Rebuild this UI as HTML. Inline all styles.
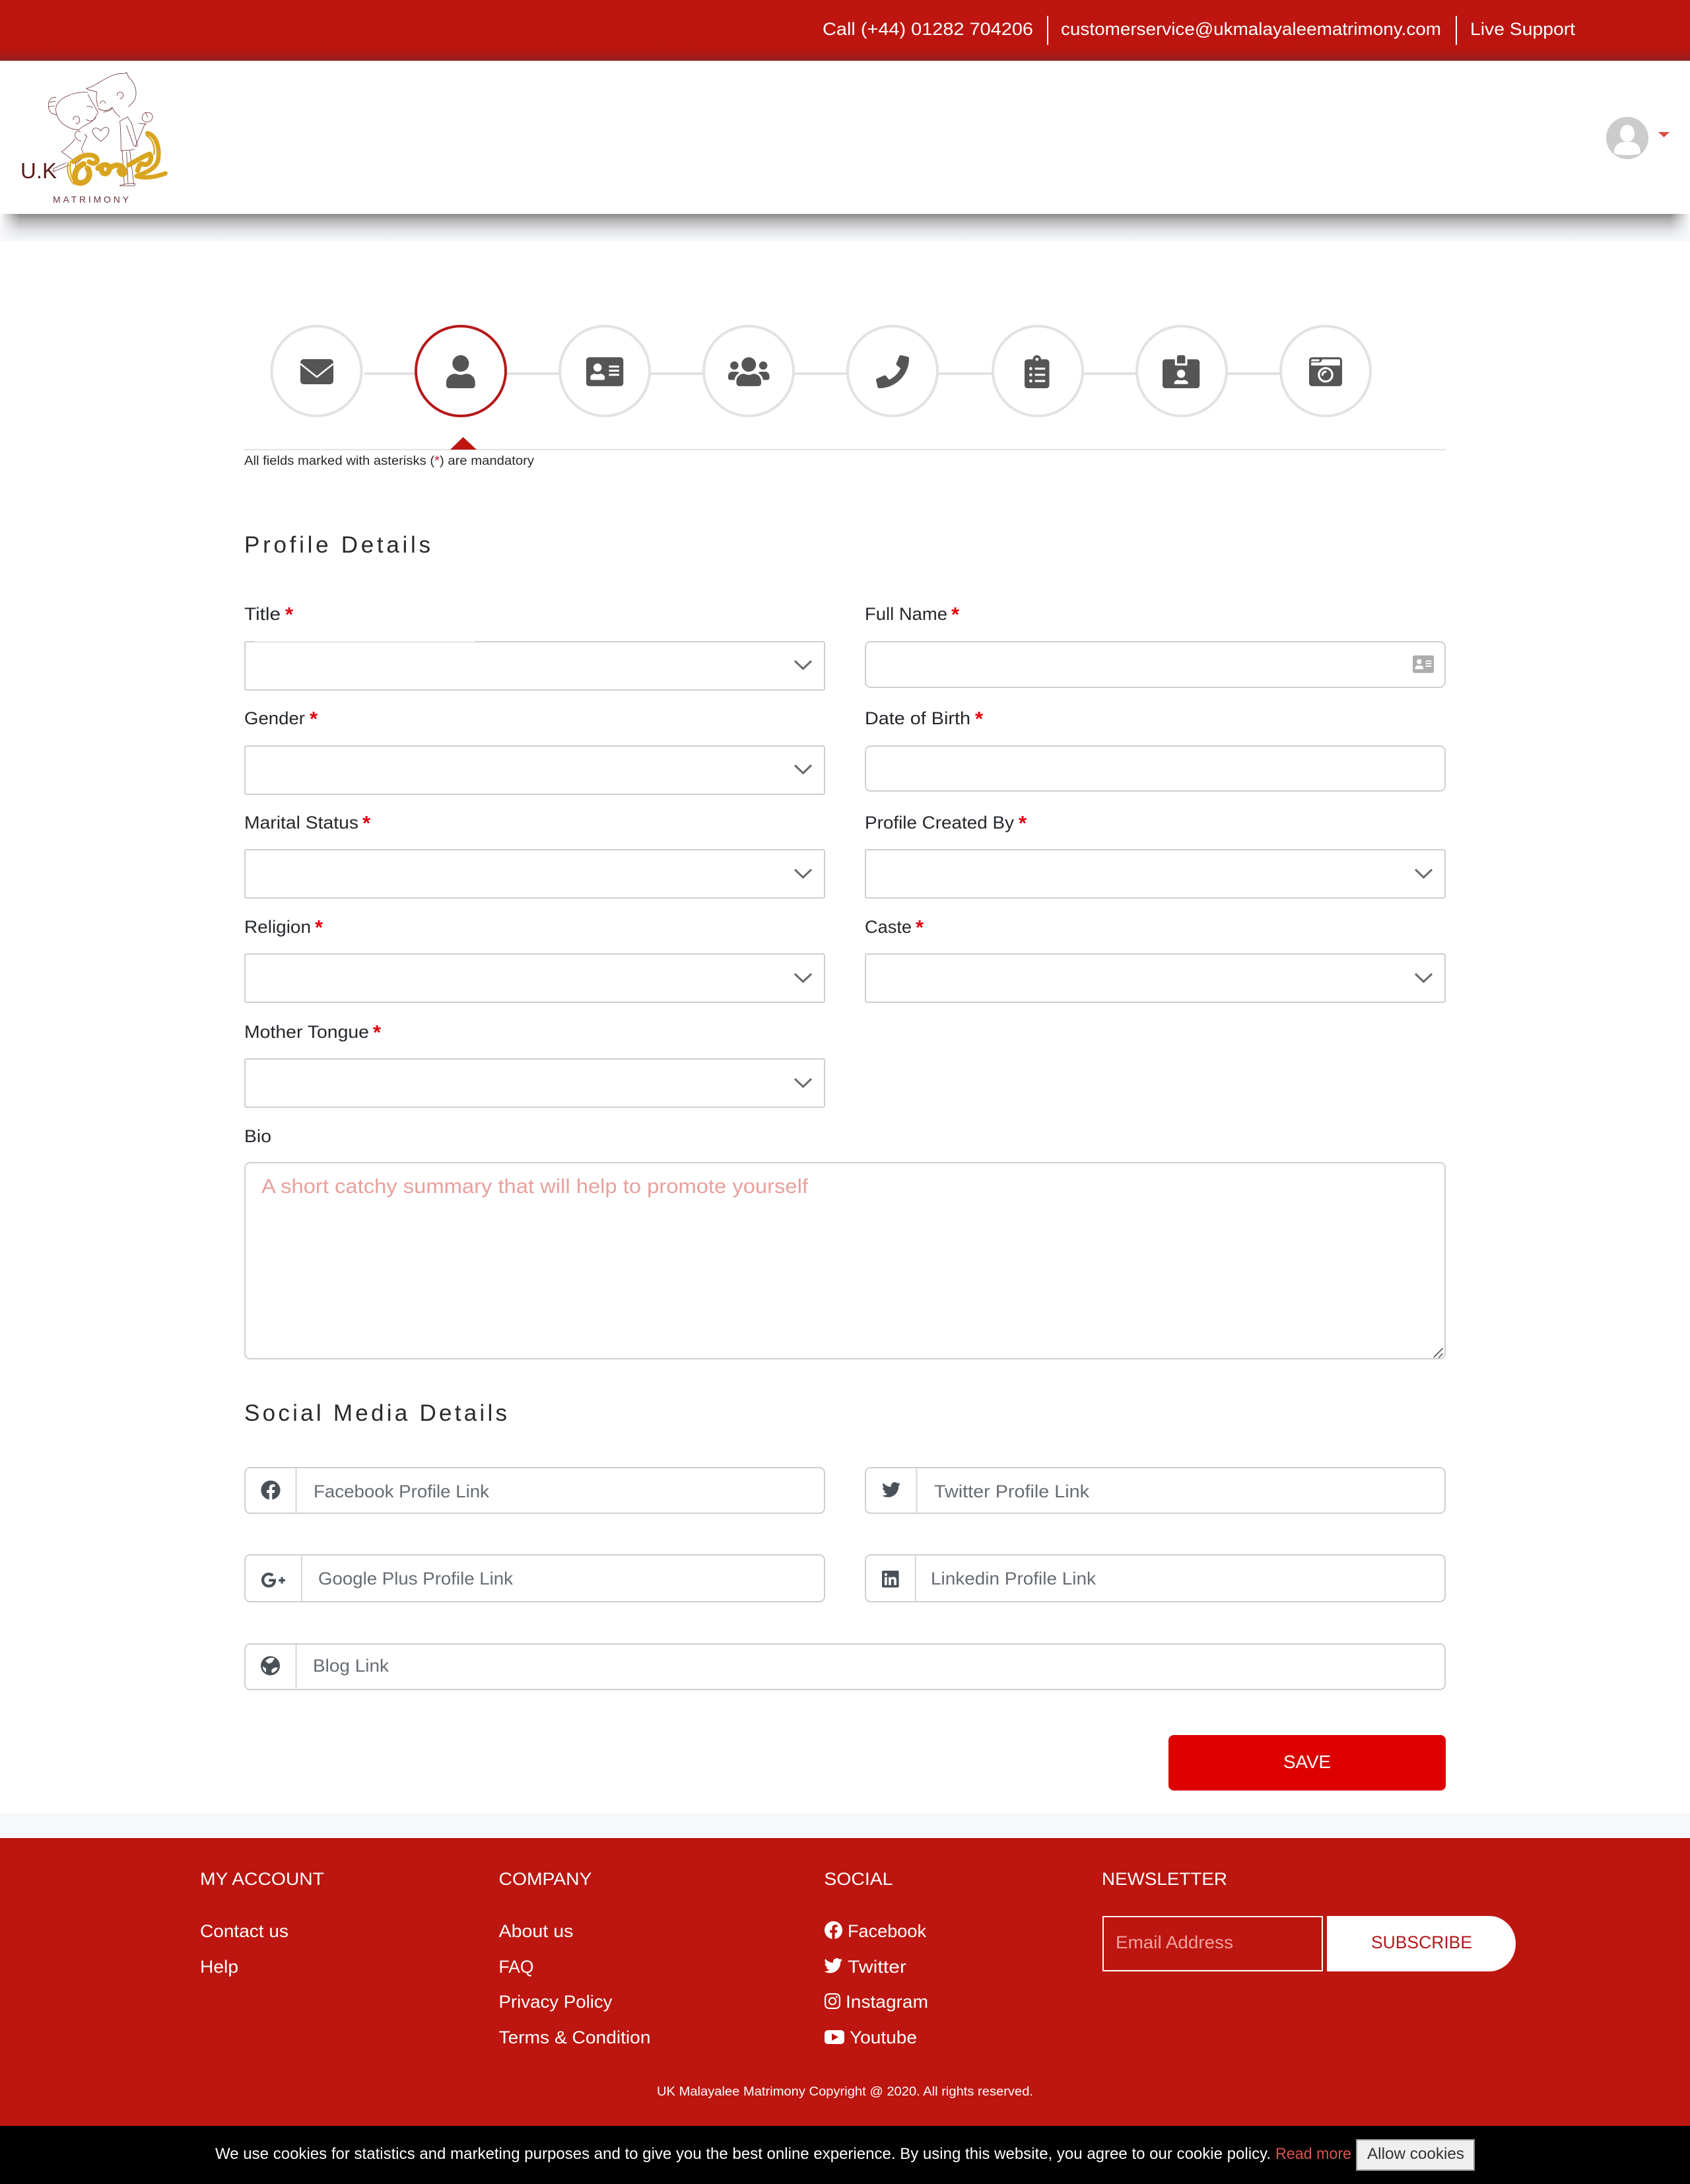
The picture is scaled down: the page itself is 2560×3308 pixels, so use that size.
<!DOCTYPE html>
<html lang="en"><head><meta charset="utf-8"><title>UK Malayalee Matrimony - Profile Details</title>
<style>
html,body{margin:0;padding:0;background:#fff;width:2560px;height:3308px;overflow:hidden}
svg{display:block}
text{font-family:"Liberation Sans",sans-serif}
.w{fill:#fff}
.l{font-size:27px;fill:#24282c}
.a{font-size:31px;font-weight:bold;fill:#e0000f}
.p{font-size:27px;fill:#666c72}
.f{font-size:27px;fill:#fff}
.b{fill:#fff;stroke:#cfcfcf;stroke-width:2}
.d{stroke:#d6d6d6;stroke-width:2}
.c{fill:none;stroke:#6a6a6a;stroke-width:3}
.s{fill:#fff;stroke:#e2e2e2;stroke-width:4}
.h{fill:#555}
.g{fill:#495057}
.lg{fill:none;stroke:#6a2f33;stroke-width:2.4;stroke-linecap:round;stroke-linejoin:round}
.br{fill:none;stroke:#d9a41f;stroke-linecap:round;stroke-linejoin:round}
</style></head>
<body>
<svg xmlns="http://www.w3.org/2000/svg" width="2560" height="3308" viewBox="0 0 2560 3308">
<defs>
<linearGradient id="tb" x1="0" y1="0" x2="0" y2="1"><stop offset="0" stop-color="#bf1510"/><stop offset=".8" stop-color="#bb1510"/><stop offset=".9" stop-color="#aa1a17"/><stop offset="1" stop-color="#8e2020"/></linearGradient>
<linearGradient id="sh" x1="0" y1="0" x2="0" y2="1"><stop offset="0" stop-color="#8a8a8a"/><stop offset=".25" stop-color="#b6b6b6"/><stop offset=".6" stop-color="#e0e1e4"/><stop offset="1" stop-color="#f6f8fa"/></linearGradient>
<linearGradient id="fl" x1="0" y1="0" x2="1" y2="0"><stop offset="0" stop-color="#f8f9fb"/><stop offset="1" stop-color="#f8f9fb" stop-opacity="0"/></linearGradient>
<linearGradient id="fr" x1="1" y1="0" x2="0" y2="0"><stop offset="0" stop-color="#f8f9fb"/><stop offset="1" stop-color="#f8f9fb" stop-opacity="0"/></linearGradient>
</defs>

<rect width="2560" height="3308" fill="#fff"/>
<!-- top bar -->
<rect width="2560" height="92" fill="url(#tb)"/>
<text class="f" x="1246" y="53" textLength="319" lengthAdjust="spacingAndGlyphs">Call (+44) 01282 704206</text>
<rect x="1586" y="24" width="2" height="44" fill="#fff"/>
<text class="f" x="1607" y="53" textLength="576" lengthAdjust="spacingAndGlyphs">customerservice@ukmalayaleematrimony.com</text>
<rect x="2205" y="24" width="2" height="44" fill="#fff"/>
<text class="f" x="2227" y="53" textLength="159" lengthAdjust="spacingAndGlyphs">Live Support</text>

<!-- header shadow -->
<rect y="324" width="2560" height="41" fill="url(#sh)"/>
<rect y="324" width="30" height="41" fill="url(#fl)"/>
<rect x="2530" y="324" width="30" height="41" fill="url(#fr)"/>

<!-- logo -->
<g transform="translate(0,90) scale(.3333)">
<path class="lg" d="M392 132C430 125 470 85 525 68C550 62 570 68 575 58L585 82C605 100 620 125 618 160C615 195 590 205 585 215M392 132C410 145 430 142 440 148C435 175 440 195 445 215M445 222C465 235 490 238 510 218C520 240 530 250 545 262M510 220L500 232L470 240M455 200C460 185 475 185 480 200M532 165C530 145 560 140 560 165C560 175 550 180 545 178"/>
<path class="lg" d="M400 150C340 145 270 170 255 215C245 270 300 320 360 320M400 160C415 190 435 220 445 240C440 250 435 265 420 280C410 290 385 295 360 318M255 172C225 170 215 195 222 225C228 245 245 252 258 250M225 195L250 190M222 215L248 212M333 275C330 255 360 250 362 275C362 290 350 295 345 290M395 215C405 210 415 215 420 220M392 272C405 285 425 280 435 265"/>
<path class="lg" d="M458 372C430 350 410 330 425 315C440 305 455 320 458 325C465 310 490 300 495 320C497 340 475 360 458 372Z"/>
<path class="lg" d="M545 280C550 340 550 390 550 415L610 410M545 280L580 262L598 290L625 390C620 400 610 395 605 385L575 300M555 415L565 570M590 415L608 565M575 420L582 565M545 572C570 565 600 562 615 565L610 575L545 575Z"/>
<path class="lg" d="M365 330C355 320 340 330 340 345C345 365 360 370 368 370M385 340L395 350L370 405L385 440L350 470L280 420C300 405 330 380 340 360M300 470L245 495L240 510L255 505L315 480M345 470L335 570"/>
<path class="lg" d="M648 255C655 240 675 235 690 250C700 265 685 285 670 285C655 285 640 275 648 255ZM660 240L672 262M660 290L615 395M630 290L665 295"/>
<g class="br">
<path stroke-width="6" d="M310 470C302 500 310 540 335 565M322 462C315 490 320 520 330 545"/>
<path stroke-width="22" d="M335 465C370 430 425 425 440 450C448 470 425 480 405 465"/>
<path stroke-width="26" d="M380 475C340 490 330 540 352 560C395 570 420 525 398 495"/>
<path stroke-width="24" d="M445 495C470 470 505 475 495 505C490 525 460 525 462 500"/>
<path stroke-width="24" d="M505 490C535 470 560 485 568 510C565 530 545 525 542 505"/>
<path stroke-width="22" d="M585 480C620 460 660 435 680 430C695 440 680 490 650 475C635 470 630 490 625 505"/>
<path stroke-width="20" d="M670 335C710 345 728 400 718 460C705 500 660 515 620 530C670 545 720 530 752 518"/>
<path stroke-width="7" d="M665 345C690 360 705 390 700 430"/>
</g>
</g>
<text x="31" y="270" font-size="33" fill="#5a1a1a" textLength="55" lengthAdjust="spacingAndGlyphs">U.K</text>
<text x="80" y="307" font-size="14" fill="#6c3338" textLength="115" lengthAdjust="spacing">MATRIMONY</text>

<!-- avatar -->
<circle cx="2465" cy="209" r="32" fill="#cccccc"/>
<ellipse cx="2465" cy="202" rx="11" ry="13" fill="#fff"/>
<path d="M2445 232C2445 220 2452 216 2459 215L2471 215C2478 216 2485 220 2485 232C2480 236 2450 236 2445 232Z" fill="#fff"/>
<path d="M2512 200H2529L2520.5 208Z" fill="#dc4a44"/>

<!-- steps -->
<rect x="552" y="564" width="1388" height="4" fill="#e2e2e2"/>
<circle class="s" cx="479.5" cy="562" r="68"/>
<circle cx="698" cy="562" r="68" fill="#fff" stroke="#b5181a" stroke-width="4"/>
<circle class="s" cx="916" cy="562" r="68"/>
<circle class="s" cx="1134" cy="562" r="68"/>
<circle class="s" cx="1352" cy="562" r="68"/>
<circle class="s" cx="1572" cy="562" r="68"/>
<circle class="s" cx="1790" cy="562" r="68"/>
<circle class="s" cx="2008" cy="562" r="68"/>

<rect class="h" x="455" y="544" width="50" height="38" rx="5"/>
<path d="M455 551L480 571L505 551" fill="none" stroke="#fff" stroke-width="2.6"/>
<g class="h">
<path transform="translate(676,538) scale(.09766)" d="M224 256c70.7 0 128-57.3 128-128S294.7 0 224 0 96 57.3 96 128s57.3 128 128 128zm89.6 32h-16.7c-22.2 10.2-46.9 16-72.9 16s-50.6-5.8-72.9-16h-16.7C60.2 288 0 348.2 0 422.4V464c0 26.5 21.5 48 48 48h352c26.5 0 48-21.5 48-48v-41.6c0-74.2-60.2-134.4-134.4-134.4z"/>
<path id="ac" transform="translate(888,538) scale(.09766)" d="M528 32H48C21.5 32 0 53.5 0 80v352c0 26.5 21.5 48 48 48h480c26.5 0 48-21.5 48-48V80c0-26.5-21.5-48-48-48zm-352 96c35.3 0 64 28.7 64 64s-28.7 64-64 64-64-28.7-64-64 28.7-64 64-64zm112 236.8c0 10.6-10 19.2-22.4 19.2H86.4C74 384 64 375.4 64 364.8v-19.2c0-31.8 30.1-57.6 67.2-57.6h5c12.3 5.1 25.7 8 39.8 8s27.6-2.9 39.8-8h5c37.1 0 67.2 25.8 67.2 57.6v19.2zM512 312c0 4.4-3.6 8-8 8H360c-4.4 0-8-3.6-8-8v-16c0-4.4 3.6-8 8-8h144c4.4 0 8 3.6 8 8v16zm0-64c0 4.4-3.6 8-8 8H360c-4.4 0-8-3.6-8-8v-16c0-4.4 3.6-8 8-8h144c4.4 0 8 3.6 8 8v16zm0-64c0 4.4-3.6 8-8 8H360c-4.4 0-8-3.6-8-8v-16c0-4.4 3.6-8 8-8h144c4.4 0 8 3.6 8 8v16z"/>
<path transform="translate(1103,538) scale(.09766)" d="M96 224c35.3 0 64-28.7 64-64s-28.7-64-64-64-64 28.7-64 64 28.7 64 64 64zm448 0c35.3 0 64-28.7 64-64s-28.7-64-64-64-64 28.7-64 64 28.7 64 64 64zm32 32h-64c-17.6 0-33.5 7.1-45.1 18.6 40.3 22.1 68.9 62 75.1 109.4h66c17.7 0 32-14.3 32-32v-32c0-35.3-28.7-64-64-64zm-256 0c61.9 0 112-50.1 112-112S381.9 32 320 32 208 82.1 208 144s50.1 112 112 112zm76.8 32h-8.3c-20.8 10-43.9 16-68.5 16s-47.6-6-68.5-16h-8.3C179.6 288 128 339.6 128 403.2V432c0 26.5 21.5 48 48 48h288c26.5 0 48-21.5 48-48v-28.8c0-63.6-51.6-115.2-115.2-115.2zm-223.7-13.4C161.5 263.1 145.6 256 128 256H64c-35.3 0-64 28.7-64 64v32c0 17.7 14.3 32 32 32h65.9c6.3-47.4 34.9-87.3 75.2-109.4z"/>
<path transform="translate(1327,538) scale(.09766)" d="M493.4 24.6l-104-24c-11.3-2.6-22.9 3.3-27.5 13.9l-48 112c-4.2 9.8-1.4 21.3 6.9 28l60.6 49.6c-36 76.7-98.9 140.5-177.2 177.2l-49.6-60.6c-6.8-8.3-18.2-11.1-28-6.9l-112 48C3.9 366.5-2 378.1.6 389.4l24 104C27.1 504.2 36.7 512 48 512c256.1 0 464-207.5 464-464 0-11.2-7.7-20.9-18.6-23.4z"/>
<path transform="translate(1552,538) scale(.09766)" d="M336 64h-80c0-35.3-28.7-64-64-64s-64 28.7-64 64H48C21.5 64 0 85.5 0 112v352c0 26.5 21.5 48 48 48h288c26.5 0 48-21.5 48-48V112c0-26.5-21.5-48-48-48zM96 424c-13.3 0-24-10.7-24-24s10.7-24 24-24 24 10.7 24 24-10.7 24-24 24zm0-96c-13.3 0-24-10.7-24-24s10.7-24 24-24 24 10.7 24 24-10.7 24-24 24zm0-96c-13.3 0-24-10.7-24-24s10.7-24 24-24 24 10.7 24 24-10.7 24-24 24zm96-192c13.3 0 24 10.7 24 24s-10.7 24-24 24-24-10.7-24-24 10.7-24 24-24zm128 368c0 4.4-3.6 8-8 8H168c-4.4 0-8-3.6-8-8v-16c0-4.4 3.6-8 8-8h144c4.4 0 8 3.6 8 8v16zm0-96c0 4.4-3.6 8-8 8H168c-4.4 0-8-3.6-8-8v-16c0-4.4 3.6-8 8-8h144c4.4 0 8 3.6 8 8v16zm0-96c0 4.4-3.6 8-8 8H168c-4.4 0-8-3.6-8-8v-16c0-4.4 3.6-8 8-8h144c4.4 0 8 3.6 8 8v16z"/>
<path transform="translate(1761,538) scale(.09766)" d="M528 64H384v96H192V64H48C21.5 64 0 85.5 0 112v352c0 26.5 21.5 48 48 48h480c26.5 0 48-21.5 48-48V112c0-26.5-21.5-48-48-48zM288 224c35.3 0 64 28.7 64 64s-28.7 64-64 64-64-28.7-64-64 28.7-64 64-64zm93.3 224H194.7c-10.4 0-18.8-10-15.6-19.8 8.3-25.6 32.4-44.2 60.9-44.2h8.2c12.3 5.1 25.7 8 39.8 8s27.6-2.9 39.8-8h8.2c28.4 0 52.5 18.5 60.9 44.2 3.2 9.8-5.2 19.8-15.6 19.8zM352 32c0-17.7-14.3-32-32-32h-64c-17.7 0-32 14.3-32 32v96h128V32z"/>
<path transform="translate(1983,538) scale(.09766)" d="M48 32C21.5 32 0 53.5 0 80v352c0 26.5 21.5 48 48 48h416c26.5 0 48-21.5 48-48V80c0-26.5-21.5-48-48-48H48zm0 32h106c3.3 0 6 2.7 6 6v20c0 3.3-2.7 6-6 6H38c-3.3 0-6-2.7-6-6V80c0-8.8 7.2-16 16-16zm426 96H38c-3.3 0-6-2.7-6-6v-36c0-3.3 2.7-6 6-6h138l30.2-45.3c1.1-1.7 3-2.7 5-2.7H464c8.8 0 16 7.2 16 16v74c0 3.3-2.7 6-6 6zM256 424c-66.2 0-120-53.8-120-120s53.8-120 120-120 120 53.8 120 120-53.8 120-120 120zm0-208c-48.5 0-88 39.5-88 88s39.5 88 88 88 88-39.5 88-88-39.5-88-88-88zm-48 104c-8.8 0-16-7.2-16-16 0-35.3 28.7-64 64-64 8.8 0 16 7.2 16 16s-7.2 16-16 16c-17.6 0-32 14.4-32 32 0 8.8-7.2 16-16 16z"/>
</g>

<rect x="370" y="680" width="1820" height="2" fill="#e2e2e2"/>
<path d="M701.5 662L722 681H682Z" fill="#bf1510"/>
<text x="370" y="704" font-size="19" fill="#2a2a2a" textLength="439" lengthAdjust="spacingAndGlyphs">All fields marked with asterisks (<tspan fill="#c8102e">*</tspan>) are mandatory</text>

<!-- profile details -->
<text x="370" y="837" font-size="35" fill="#2a2a2a" textLength="282" lengthAdjust="spacing">Profile Details</text>

<text class="l" x="370" y="939" textLength="55" lengthAdjust="spacingAndGlyphs">Title</text><text class="a" x="432" y="941">*</text>
<text class="l" x="1310" y="939" textLength="125" lengthAdjust="spacingAndGlyphs">Full Name</text><text class="a" x="1441" y="941">*</text>
<text class="l" x="370" y="1097" textLength="92" lengthAdjust="spacingAndGlyphs">Gender</text><text class="a" x="469" y="1099">*</text>
<text class="l" x="1310" y="1097" textLength="160" lengthAdjust="spacingAndGlyphs">Date of Birth</text><text class="a" x="1477" y="1099">*</text>
<text class="l" x="370" y="1255" textLength="173" lengthAdjust="spacingAndGlyphs">Marital Status</text><text class="a" x="549" y="1257">*</text>
<text class="l" x="1310" y="1255" textLength="226" lengthAdjust="spacingAndGlyphs">Profile Created By</text><text class="a" x="1543" y="1257">*</text>
<text class="l" x="370" y="1413" textLength="101" lengthAdjust="spacingAndGlyphs">Religion</text><text class="a" x="477" y="1415">*</text>
<text class="l" x="1310" y="1413" textLength="71" lengthAdjust="spacingAndGlyphs">Caste</text><text class="a" x="1387" y="1415">*</text>
<text class="l" x="370" y="1572" textLength="189" lengthAdjust="spacingAndGlyphs">Mother Tongue</text><text class="a" x="565" y="1574">*</text>
<text class="l" x="370" y="1730" textLength="41" lengthAdjust="spacingAndGlyphs">Bio</text>

<!-- selects -->
<rect class="b" x="371" y="972" width="878" height="73" rx="2"/><rect x="385" y="970" width="334" height="2" fill="#fff"/>
<rect class="b" x="371" y="1130" width="878" height="73" rx="2"/>
<rect class="b" x="371" y="1287" width="878" height="73" rx="2"/>
<rect class="b" x="371" y="1445" width="878" height="73" rx="2"/>
<rect class="b" x="371" y="1604" width="878" height="73" rx="2"/>
<rect class="b" x="1311" y="1287" width="878" height="73" rx="2"/>
<rect class="b" x="1311" y="1445" width="878" height="73" rx="2"/>
<path class="c" d="M1204 1001L1216.5 1013L1229 1001"/>
<path class="c" d="M1204 1159L1216.5 1171L1229 1159"/>
<path class="c" d="M1204 1317L1216.5 1329L1229 1317"/>
<path class="c" d="M1204 1475L1216.5 1487L1229 1475"/>
<path class="c" d="M1204 1634L1216.5 1646L1229 1634"/>
<path class="c" d="M2144 1317L2156.5 1329L2169 1317"/>
<path class="c" d="M2144 1475L2156.5 1487L2169 1475"/>

<!-- inputs -->
<rect class="b" x="1311" y="972" width="878" height="69" rx="8"/>
<path fill="#adadad" transform="translate(2140,990.8) scale(.0556,.0596)" d="M528 32H48C21.5 32 0 53.5 0 80v352c0 26.5 21.5 48 48 48h480c26.5 0 48-21.5 48-48V80c0-26.5-21.5-48-48-48zm-352 96c35.3 0 64 28.7 64 64s-28.7 64-64 64-64-28.7-64-64 28.7-64 64-64zm112 236.8c0 10.6-10 19.2-22.4 19.2H86.4C74 384 64 375.4 64 364.8v-19.2c0-31.8 30.1-57.6 67.2-57.6h5c12.3 5.1 25.7 8 39.8 8s27.6-2.9 39.8-8h5c37.1 0 67.2 25.8 67.2 57.6v19.2zM512 312c0 4.4-3.6 8-8 8H360c-4.4 0-8-3.6-8-8v-16c0-4.4 3.6-8 8-8h144c4.4 0 8 3.6 8 8v16zm0-64c0 4.4-3.6 8-8 8H360c-4.4 0-8-3.6-8-8v-16c0-4.4 3.6-8 8-8h144c4.4 0 8 3.6 8 8v16zm0-64c0 4.4-3.6 8-8 8H360c-4.4 0-8-3.6-8-8v-16c0-4.4 3.6-8 8-8h144c4.4 0 8 3.6 8 8v16z"/>
<rect class="b" x="1311" y="1130" width="878" height="68" rx="8"/>

<!-- textarea -->
<rect class="b" x="371" y="1761" width="1818" height="297" rx="8"/>
<text x="396" y="1807" font-size="31" fill="#e8a09c" textLength="828" lengthAdjust="spacingAndGlyphs">A short catchy summary that will help to promote yourself</text>
<path d="M2171.7 2056L2185.7 2042M2179.3 2056.7L2185.7 2050" stroke="#555" stroke-width="1.6" fill="none"/>

<!-- social -->
<text x="370" y="2152" font-size="35" fill="#2a2a2a" textLength="398" lengthAdjust="spacing">Social Media Details</text>

<rect class="b" x="371" y="2223" width="878" height="69" rx="8"/><path class="d" d="M448.5 2223V2292"/>
<path class="g" transform="translate(395,2242) scale(.0586)" d="M504 256C504 119 393 8 256 8S8 119 8 256c0 123.78 90.69 226.38 209.25 245V327.69h-63V256h63v-54.64c0-62.15 37-96.48 93.67-96.48 27.14 0 55.52 4.84 55.52 4.84v61h-31.28c-30.8 0-40.41 19.12-40.41 38.73V256h68.78l-11 71.69h-57.78V501C413.31 482.38 504 379.78 504 256z"/>
<text class="p" x="475" y="2268" textLength="266" lengthAdjust="spacingAndGlyphs">Facebook Profile Link</text>

<rect class="b" x="1311" y="2223" width="878" height="69" rx="8"/><path class="d" d="M1388.5 2223V2292"/>
<path class="g" transform="translate(1336,2242.4) scale(.0547)" d="M459.37 151.716c.325 4.548.325 9.097.325 13.645 0 138.72-105.583 298.558-298.558 298.558-59.452 0-114.68-17.219-161.137-47.106 8.447.974 16.568 1.299 25.34 1.299 49.055 0 94.213-16.568 130.274-44.832-46.132-.975-84.792-31.188-98.112-72.772 6.498.974 12.995 1.624 19.818 1.624 9.421 0 18.843-1.3 27.614-3.573-48.081-9.747-84.143-51.98-84.143-102.985v-1.299c13.969 7.797 30.214 12.67 47.431 13.319-28.264-18.843-46.781-51.005-46.781-87.391 0-19.492 5.197-37.36 14.294-52.954 51.655 63.675 129.3 105.258 216.365 109.807-1.624-7.797-2.599-15.918-2.599-24.04 0-57.828 46.782-104.934 104.934-104.934 30.213 0 57.502 12.67 76.67 33.137 23.715-4.548 46.456-13.32 66.599-25.34-7.798 24.366-24.366 44.833-46.132 57.827 21.117-2.273 41.584-8.122 60.426-16.243-14.292 20.791-32.161 39.308-52.628 54.253z"/>
<text class="p" x="1415" y="2268" textLength="235" lengthAdjust="spacingAndGlyphs">Twitter Profile Link</text>

<rect class="b" x="371" y="2355" width="878" height="71" rx="8"/><path class="d" d="M457 2355V2426"/>
<path class="g" transform="translate(395.2,2378.2) scale(.0586)" d="M386.061 228.496c1.834 9.692 3.143 19.384 3.143 31.956C389.204 370.205 315.599 448 204.8 448c-106.084 0-192-85.915-192-192s85.916-192 192-192c51.864 0 95.083 18.859 128.611 50.292l-52.126 50.03c-14.145-13.621-39.028-29.599-76.485-29.599-65.484 0-118.92 54.221-118.92 121.277 0 67.056 53.436 121.277 118.92 121.277 75.961 0 104.513-54.745 108.965-82.773H204.8v-66.009h181.261zm185.406 6.437V179.2h-56.001v55.733h-55.733v56.001h55.733v55.733h56.001v-55.733H627.2v-56.001h-55.733z"/>
<text class="p" x="482" y="2400" textLength="295" lengthAdjust="spacingAndGlyphs">Google Plus Profile Link</text>

<rect class="b" x="1311" y="2355" width="878" height="71" rx="8"/><path class="d" d="M1386.7 2355V2426"/>
<path class="g" transform="translate(1336,2377.2) scale(.057)" d="M416 32H31.9C14.3 32 0 46.5 0 64.3v383.4C0 465.5 14.3 480 31.9 480H416c17.6 0 32-14.5 32-32.3V64.3c0-17.8-14.4-32.3-32-32.3zM135.4 416H69V202.2h66.5V416zm-33.2-243c-21.3 0-38.5-17.3-38.5-38.5S80.9 96 102.2 96c21.2 0 38.5 17.3 38.5 38.5 0 21.3-17.2 38.5-38.5 38.5zm282.1 243h-66.4V312c0-24.8-.5-56.7-34.5-56.7-34.6 0-39.9 27-39.9 54.9V416h-66.4V202.2h63.7v29.2h.9c8.9-16.8 30.6-34.5 62.9-34.5 67.2 0 79.7 44.3 79.7 101.9V416z"/>
<text class="p" x="1410" y="2400" textLength="250" lengthAdjust="spacingAndGlyphs">Linkedin Profile Link</text>

<rect class="b" x="371" y="2490" width="1818" height="69" rx="8"/><path class="d" d="M448.5 2490V2559"/>
<circle class="g" cx="409.5" cy="2523" r="14.5"/>
<path d="M402 2516C406 2511 412 2510 416 2512L412 2518L407 2520ZM411 2530C414 2526 418 2525 421 2526C419 2531 415 2533 412 2534ZM398 2524L403 2527L403 2533C400 2531 398 2528 398 2524Z" fill="#fff"/>
<text class="p" x="474" y="2532" textLength="115" lengthAdjust="spacingAndGlyphs">Blog Link</text>

<rect x="1770" y="2628" width="420" height="84" rx="8" fill="#dc0000"/>
<text x="1944" y="2678" font-size="28" fill="#fff" textLength="72" lengthAdjust="spacingAndGlyphs">SAVE</text>

<!-- footer -->
<rect y="2746" width="2560" height="38" fill="#f8f9fb"/>
<rect y="2784" width="2560" height="436" fill="#bd150f"/>
<text class="f" x="303" y="2855" textLength="188" lengthAdjust="spacingAndGlyphs">MY ACCOUNT</text>
<text class="f" x="755.5" y="2855" textLength="141" lengthAdjust="spacingAndGlyphs">COMPANY</text>
<text class="f" x="1248.4" y="2855" textLength="104" lengthAdjust="spacingAndGlyphs">SOCIAL</text>
<text class="f" x="1669" y="2855" textLength="190" lengthAdjust="spacingAndGlyphs">NEWSLETTER</text>

<text class="f" x="303" y="2934" textLength="134" lengthAdjust="spacingAndGlyphs">Contact us</text>
<text class="f" x="303" y="2988" textLength="58" lengthAdjust="spacingAndGlyphs">Help</text>
<text class="f" x="755.5" y="2934" textLength="113" lengthAdjust="spacingAndGlyphs">About us</text>
<text class="f" x="755.5" y="2988" textLength="53" lengthAdjust="spacingAndGlyphs">FAQ</text>
<text class="f" x="755.5" y="3041" textLength="172" lengthAdjust="spacingAndGlyphs">Privacy Policy</text>
<text class="f" x="755.5" y="3095" textLength="230" lengthAdjust="spacingAndGlyphs">Terms &amp; Condition</text>

<path class="w" transform="translate(1248.6,2909.6) scale(.0544)" d="M504 256C504 119 393 8 256 8S8 119 8 256c0 123.78 90.69 226.38 209.25 245V327.69h-63V256h63v-54.64c0-62.15 37-96.48 93.67-96.48 27.14 0 55.52 4.84 55.52 4.84v61h-31.28c-30.8 0-40.41 19.12-40.41 38.73V256h68.78l-11 71.69h-57.78V501C413.31 482.38 504 379.78 504 256z"/>
<text class="f" x="1284" y="2934" textLength="119" lengthAdjust="spacingAndGlyphs">Facebook</text>
<path class="w" transform="translate(1248.4,2963.4) scale(.054)" d="M459.37 151.716c.325 4.548.325 9.097.325 13.645 0 138.72-105.583 298.558-298.558 298.558-59.452 0-114.68-17.219-161.137-47.106 8.447.974 16.568 1.299 25.34 1.299 49.055 0 94.213-16.568 130.274-44.832-46.132-.975-84.792-31.188-98.112-72.772 6.498.974 12.995 1.624 19.818 1.624 9.421 0 18.843-1.3 27.614-3.573-48.081-9.747-84.143-51.98-84.143-102.985v-1.299c13.969 7.797 30.214 12.67 47.431 13.319-28.264-18.843-46.781-51.005-46.781-87.391 0-19.492 5.197-37.36 14.294-52.954 51.655 63.675 129.3 105.258 216.365 109.807-1.624-7.797-2.599-15.918-2.599-24.04 0-57.828 46.782-104.934 104.934-104.934 30.213 0 57.502 12.67 76.67 33.137 23.715-4.548 46.456-13.32 66.599-25.34-7.798 24.366-24.366 44.833-46.132 57.827 21.117-2.273 41.584-8.122 60.426-16.243-14.292 20.791-32.161 39.308-52.628 54.253z"/>
<text class="f" x="1284" y="2988" textLength="89" lengthAdjust="spacingAndGlyphs">Twitter</text>
<path class="w" transform="translate(1249,3017.3) scale(.0536)" d="M224.1 141c-63.6 0-114.9 51.3-114.9 114.9s51.3 114.9 114.9 114.9S339 319.5 339 255.9 287.7 141 224.1 141zm0 189.6c-41.1 0-74.7-33.5-74.7-74.7s33.5-74.7 74.7-74.7 74.7 33.5 74.7 74.7-33.6 74.7-74.7 74.7zm146.4-194.3c0 14.9-12 26.8-26.8 26.8-14.9 0-26.8-12-26.8-26.8s12-26.8 26.8-26.8 26.8 12 26.8 26.8zm76.1 27.2c-1.7-35.9-9.9-67.7-36.2-93.9-26.2-26.2-58-34.4-93.9-36.2-37-2.1-147.9-2.1-184.9 0-35.8 1.7-67.6 9.9-93.9 36.1s-34.4 58-36.2 93.9c-2.1 37-2.1 147.9 0 184.9 1.7 35.9 9.9 67.7 36.2 93.9s58 34.4 93.9 36.2c37 2.1 147.9 2.1 184.9 0 35.9-1.7 67.7-9.9 93.9-36.2 26.2-26.2 34.4-58 36.2-93.9 2.1-37 2.1-147.8 0-184.8zM398.8 388c-7.8 19.6-22.9 34.7-42.6 42.6-29.5 11.7-99.5 9-132.1 9s-102.7 2.6-132.1-9c-19.6-7.8-34.7-22.9-42.6-42.6-11.7-29.5-9-99.5-9-132.1s-2.6-102.7 9-132.1c7.8-19.6 22.9-34.7 42.6-42.6 29.5-11.7 99.5-9 132.1-9s102.7-2.6 132.1 9c19.6 7.8 34.7 22.9 42.6 42.6 11.7 29.5 9 99.5 9 132.1s2.7 102.7-9 132.1z"/>
<text class="f" x="1281" y="3041" textLength="125" lengthAdjust="spacingAndGlyphs">Instagram</text>
<rect class="w" x="1249" y="3075" width="30" height="21" rx="5"/>
<path d="M1260 3080L1270 3085.5L1260 3091Z" fill="#bd150f"/>
<text class="f" x="1287" y="3095" textLength="102" lengthAdjust="spacingAndGlyphs">Youtube</text>

<rect x="1671" y="2903" width="332" height="82" fill="none" stroke="#fff" stroke-width="2"/>
<text x="1690" y="2951" font-size="27" fill="#f2a3a0" textLength="178" lengthAdjust="spacingAndGlyphs">Email Address</text>
<path d="M2010 2902H2256A40 42 0 0 1 2256 2986H2010Z" fill="#fff"/>
<text x="2077" y="2951" font-size="27" fill="#b5181a" textLength="153" lengthAdjust="spacingAndGlyphs">SUBSCRIBE</text>

<text x="995" y="3174" font-size="19" fill="#fff" textLength="570" lengthAdjust="spacingAndGlyphs">UK Malayalee Matrimony Copyright @ 2020. All rights reserved.</text>

<!-- cookie bar -->
<rect y="3220" width="2560" height="88" fill="#000"/>
<text x="326" y="3270" font-size="24" fill="#fff" textLength="1599" lengthAdjust="spacingAndGlyphs">We use cookies for statistics and marketing purposes and to give you the best online experience. By using this website, you agree to our cookie policy.</text>
<text x="1932" y="3270" font-size="24" fill="#d9534f" textLength="115" lengthAdjust="spacingAndGlyphs">Read more</text>
<rect x="2055" y="3241" width="178" height="46" fill="#efefef" stroke="#9a9a9a" stroke-width="2"/>
<text x="2071" y="3270" font-size="24" fill="#333" textLength="147" lengthAdjust="spacingAndGlyphs">Allow cookies</text>
</svg>
</body></html>
